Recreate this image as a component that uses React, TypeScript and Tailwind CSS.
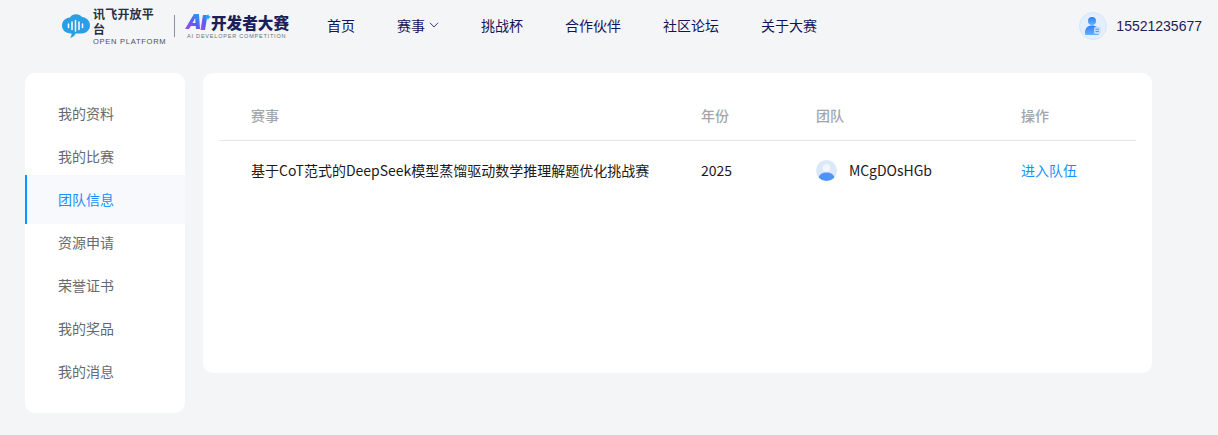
const cjk = '[font-family:"Noto_Sans_CJK_SC","Noto_Sans",sans-serif]';

const navItems = ['首页', '赛事', '挑战杯', '合作伙伴', '社区论坛', '关于大赛'];
const menuItems = ['我的资料', '我的比赛', '团队信息', '资源申请', '荣誉证书', '我的奖品', '我的消息'];

function Logo() {
  return (
    <div className="flex items-center">
      <svg width="28" height="25" viewBox="0 0 28 25" className="mr-[3px]">
        <path
          d="M8 3.500C10-.5 17-1 20 3c4 .2 8 3.500 8 8.300 0 4.700-3.500 8-8 8.200h-6.500c-.6 1.800-2.500 4-5.500 4.500 1.200-1.300 1.600-2.900 1.500-4.500C4 19.500 0 16.500 0 11.500 0 7 3.500 3.800 8 3.500z"
          fill="#2a9fe6"
        />
        <g stroke="#fff" strokeWidth="1.500" strokeLinecap="round">
          <path d="M6.500 10v3.500M10 8v7.500M13.500 6.500v10.500M17 8v7.500M20.500 10v3.500" />
        </g>
      </svg>
      <div className="flex w-[73px] flex-col">
        <span className={`${cjk} text-[12px] leading-[15px] font-bold tracking-[0.2px] text-[#2b3040]`}>讯飞开放平台</span>
        <span className='mt-[1px] whitespace-nowrap [font-family:"Liberation_Sans",sans-serif] text-[7.500px] leading-[9px] tracking-[0.750px] text-[#4b4f5c]'>
          OPEN PLATFORM
        </span>
      </div>
      <div className="mr-[10px] ml-[8px] h-[22px] w-px bg-[#8d9096]" />
      <div className="flex flex-col">
        <div className="flex items-center">
          <svg width="27" height="19" viewBox="0 0 27 19">
            <defs>
              <linearGradient id="aiGrad" x1="0" y1="1" x2="1" y2="0">
                <stop offset="0" stopColor="#a44df0" />
                <stop offset="0.500" stopColor="#5a5cf5" />
                <stop offset="1" stopColor="#1fa6f7" />
              </linearGradient>
            </defs>
            <path d="M0 16 9 1h5l1 15h-4l-.3-3H6l-2 3zM7.500 10h3l-.3-5z" fill="url(#aiGrad)" fillRule="evenodd" />
            <path d="M18 2h4.500L20 17h-4.500z" fill="url(#aiGrad)" />
            <path d="M23 1l1 2 2 1-2 1-1 2-1-2-2-1 2-1z" fill="#1fa6f7" />
          </svg>
          <span className={`${cjk} ml-[-1px] w-[78px] text-[15.600px] leading-[20px] font-black whitespace-nowrap text-[#1b1f5c]`}>开发者大赛</span>
        </div>
        <span className='mt-[1px] ml-[2px] whitespace-nowrap [font-family:"Liberation_Sans",sans-serif] text-[5.500px] leading-[7px] tracking-[0.800px] text-[#6b7080]'>
          AI DEVELOPER COMPETITION
        </span>
      </div>
    </div>
  );
}

function UserAvatar() {
  return (
    <div className="flex h-7 w-7 items-center justify-center rounded-full border border-[#d5e6fb] bg-[#e3effd]">
      <svg width="20" height="20" viewBox="0 0 20 20">
        <defs>
          <linearGradient id="userGrad" x1="0" y1="0" x2="0" y2="1">
            <stop offset="0" stopColor="#2f7ff0" />
            <stop offset="1" stopColor="#66b2fb" />
          </linearGradient>
        </defs>
        <circle cx="9" cy="5" r="4" fill="url(#userGrad)" />
        <path d="M2 18c-.7-6 3-8.500 7-8.500s7.700 2.500 7 8.500c-.1.7-.6 1-1.200 1H3.200c-.6 0-1.100-.3-1.200-1z" fill="url(#userGrad)" />
        <rect x="11" y="11" width="6.500" height="7" rx="1.500" fill="#c3dafa" />
        <path d="M12.500 13.200h3.500M12.500 15.500h3.500" stroke="#4d86e0" strokeWidth="0.800" />
      </svg>
    </div>
  );
}

function TeamAvatar() {
  return (
    <div className="h-[21px] w-[21px] overflow-hidden rounded-full bg-[#dbe8fa]">
      <svg width="21" height="21" viewBox="0 0 21 21">
        <circle cx="10.500" cy="8" r="3.800" fill="#f3f7fd" />
        <path d="M2 21c0-6 3.500-8.500 8.500-8.500S19 15 19 21z" fill="#4f94f5" />
      </svg>
    </div>
  );
}

export default function App() {
  return (
    <div className={`${cjk} h-[435px] w-[1218px] overflow-hidden bg-[#f4f5f7]`}>
      <header className="flex h-[52px] items-center pr-4 pl-[62px]">
        <Logo />
        <nav className="mb-[2px] ml-[38px] flex items-center gap-[42px] text-[14px] text-[#13135c]">
          {navItems.map((item) => (
            <div key={item} className="flex items-center">
              {item}
              {item === '赛事' && (
                <svg width="10" height="6" viewBox="0 0 10 6" className="ml-[4px]" fill="none" stroke="#3a3d78" strokeWidth="1">
                  <path d="M1 .8 5 5l4-4.200" />
                </svg>
              )}
            </div>
          ))}
        </nav>
        <div className="ml-auto flex items-center gap-[9px]">
          <UserAvatar />
          <span className='[font-family:"Liberation_Sans",sans-serif] text-[14px] text-[#1c2158]'>15521235677</span>
        </div>
      </header>

      <main className="mt-[21px] flex items-start gap-[18px] pl-[25px]">
        <aside className="h-[340px] w-[160px] rounded-[10px] bg-white pt-4">
          <ul>
            {menuItems.map((item) => {
              const active = item === '团队信息';
              return (
                <li
                  key={item}
                  className={`-mb-[6px] flex h-[49px] items-center border-l-2 pl-[31px] text-[14px] ${
                    active ? 'border-[#0a96fa] bg-[#f7f9fc] text-[#1890ff]' : 'border-transparent text-[#666a70]'
                  }`}
                >
                  {item}
                </li>
              );
            })}
          </ul>
        </aside>

        <section className="h-[300px] w-[949px] rounded-[10px] bg-white px-4">
          <div className="grid h-[68px] grid-cols-[450px_115px_205px_1fr] items-center border-b border-[#e3e5e8] pt-[18px] pl-8 text-[14px] font-medium text-[#a1a6ab]">
            <div>赛事</div>
            <div>年份</div>
            <div>团队</div>
            <div>操作</div>
          </div>
          <div className="grid h-[59px] grid-cols-[450px_115px_205px_1fr] items-center pl-8 text-[14px] text-[#1a1a22]">
            <div className="whitespace-nowrap">基于CoT范式的DeepSeek模型蒸馏驱动数学推理解题优化挑战赛</div>
            <div>2025</div>
            <div className="flex items-center gap-3">
              <TeamAvatar />
              <span>MCgDOsHGb</span>
            </div>
            <div className="text-[#1890ff]">进入队伍</div>
          </div>
        </section>
      </main>
    </div>
  );
}
